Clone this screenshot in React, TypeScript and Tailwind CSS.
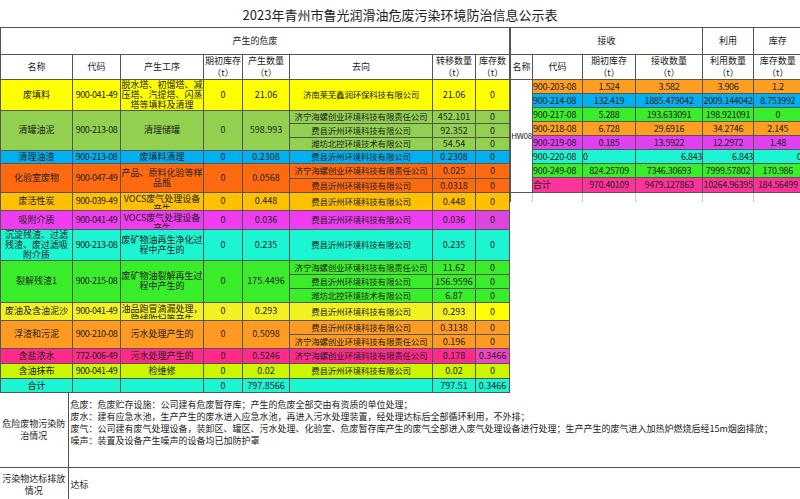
import React from "react";

const B = "border border-[#555]";

type Sub = { dest: string; qty: string; stock: string; stockBg?: string };
type Row = { name: string; code: string; proc: string; init: string; prod: string; bg: string; subs: Sub[]; hs: string[]; clip?: boolean };

const rows: Row[] = [
  { name: "废填料", code: "900-041-49", proc: "脱水塔、初馏塔、减压塔、汽提塔、闪蒸塔等填料及清理", init: "0", prod: "21.06", bg: "bg-[#ffff00]", subs: [{ dest: "济南莱芜鑫润环保科技有限公司", qty: "21.06", stock: "0" }], hs: ["h-[31px]"] },
  { name: "清罐油泥", code: "900-213-08", proc: "清理储罐", init: "0", prod: "598.993", bg: "bg-[#92d050]", subs: [{ dest: "济宁海螺创业环境科技有限责任公司", qty: "452.101", stock: "0" }, { dest: "费县沂州环境科技有限公司", qty: "92.352", stock: "0" }, { dest: "潍坊北控环境技术有限公司", qty: "54.54", stock: "0" }], hs: ["h-[13px]", "h-[14px]", "h-[13px]"] },
  { name: "清理油渣", code: "900-213-08", proc: "废填料清理", init: "0", prod: "0.2308", bg: "bg-[#00b0f0]", subs: [{ dest: "费县沂州环境科技有限公司", qty: "0.2308", stock: "0" }], hs: ["h-[13px]"] },
  { name: "化验室废物", code: "900-047-49", proc: "产品、原料化验等样品瓶", init: "0", prod: "0.0568", bg: "bg-[#ff6a10]", subs: [{ dest: "济宁海螺创业环境科技有限责任公司", qty: "0.025", stock: "0" }, { dest: "费县沂州环境科技有限公司", qty: "0.0318", stock: "0" }], hs: ["h-[15px]", "h-[14px]"] },
  { name: "废活性炭", code: "900-039-49", proc: "VOCS废气处理设备产生", init: "0", prod: "0.448", bg: "bg-[#ffc000]", subs: [{ dest: "费县沂州环境科技有限公司", qty: "0.448", stock: "0" }], hs: ["h-[18px]"], clip: true },
  { name: "吸附介质", code: "900-041-49", proc: "VOCS废气处理设备产生", init: "0", prod: "0.036", bg: "bg-[#f03cf0]", subs: [{ dest: "费县沂州环境科技有限公司", qty: "0.036", stock: "0", stockBg: "bg-[#dd44dd]" }], hs: ["h-[19px]"], clip: true },
  { name: "沉淀残渣、过滤残渣、废过滤吸附介质", code: "900-213-08", proc: "废矿物油再生净化过程中产生的", init: "0", prod: "0.235", bg: "bg-[#1cf5d2]", subs: [{ dest: "费县沂州环境科技有限公司", qty: "0.235", stock: "0" }], hs: ["h-[31px]"] },
  { name: "裂解残渣1", code: "900-215-08", proc: "废矿物油裂解再生过程中产生的", init: "0", prod: "175.4496", bg: "bg-[#3aed2a]", subs: [{ dest: "济宁海螺创业环境科技有限责任公司", qty: "11.62", stock: "0" }, { dest: "费县沂州环境科技有限公司", qty: "156.9596", stock: "0" }, { dest: "潍坊北控环境技术有限公司", qty: "6.87", stock: "0" }], hs: ["h-[14px]", "h-[14px]", "h-[14px]"] },
  { name: "废油及含油泥沙", code: "900-041-49", proc: "油品跑冒滴漏处理，管线吹扫等产生", init: "0", prod: "0.293", bg: "bg-[#f2f222]", subs: [{ dest: "费县沂州环境科技有限公司", qty: "0.293", stock: "0", stockBg: "bg-[#ffff00]" }], hs: ["h-[18px]"], clip: true },
  { name: "浮渣和污泥", code: "900-210-08", proc: "污水处理产生的", init: "0", prod: "0.5098", bg: "bg-[#ff9a22]", subs: [{ dest: "费县沂州环境科技有限公司", qty: "0.3138", stock: "0" }, { dest: "济宁海螺创业环境科技有限责任公司", qty: "0.196", stock: "0" }], hs: ["h-[14px]", "h-[14px]"] },
  { name: "含盐浓水", code: "772-006-49", proc: "污水处理产生的", init: "0", prod: "0.5246", bg: "bg-[#ff2a8a]", subs: [{ dest: "济宁海螺创业环境科技有限责任公司", qty: "0.178", stock: "0.3466", stockBg: "bg-[#f044c0]" }], hs: ["h-[15px]"] },
  { name: "含油抹布", code: "900-041-49", proc: "检维修", init: "0", prod: "0.02", bg: "bg-[#ccf500]", subs: [{ dest: "费县沂州环境科技有限公司", qty: "0.02", stock: "0" }], hs: ["h-[15px]"] },
];

const right = [
  { code: "900-203-08", a: "1.524", b: "3.582", c: "3.906", d: "1.2", bg: "bg-[#ff9f22]" },
  { code: "900-214-08", a: "132.419", b: "1885.479042", c: "2009.144042", d: "8.753992", bg: "bg-[#00b0f0]" },
  { code: "900-217-08", a: "5.288", b: "193.633091", c: "198.921091", d: "0", bg: "bg-[#3aed2a]" },
  { code: "900-218-08", a: "6.728", b: "29.6916", c: "34.2746", d: "2.145", bg: "bg-[#ff9f22]" },
  { code: "900-219-08", a: "0.185", b: "13.5922", c: "12.2972", d: "1.48", bg: "bg-[#e040f0]" },
  { code: "900-220-08", a: "0", b: "6.843", c: "6.843", d: "0", bg: "bg-[#1cf5d2]", r: true },
  { code: "900-249-08", a: "824.25709", b: "7346.30693", c: "7999.57802", d: "170.986", bg: "bg-[#3aed2a]" },
  { code: "合计", a: "970.40109", b: "9479.127863", c: "10264.96395", d: "184.56499", bg: "bg-[#ff3399]" },
];

export default function App() {
  return (
    <div className="w-[800px] h-[499px] bg-white overflow-hidden text-[9px] leading-[12px] text-[#222]" style={{ fontFamily: '"Noto Sans CJK SC", "Liberation Sans", sans-serif' }}>
      <div className="h-[28px] border-b border-[#555] flex items-center justify-center text-[13px] pt-[2px]">2023年青州市鲁光润滑油危废污染环境防治信息公示表</div>
      <div className="flex">
        <table className="table-fixed border-collapse w-[509px] text-center">
          <colgroup>
            <col className="w-[72px]" /><col className="w-[48px]" /><col className="w-[83px]" /><col className="w-[39px]" /><col className="w-[47px]" /><col className="w-[143px]" /><col className="w-[43px]" /><col className="w-[34px]" />
          </colgroup>
          <tbody>
            <tr className="h-[26px]"><td colSpan={8} className={B + " border-t-0"}>产生的危废</td></tr>
            <tr className="h-[21px]">
              <td className={B}>名称</td><td className={B}>代码</td><td className={B}>产生工序</td>
              <td className={B}>期初库存<br />（t）</td><td className={B}>产生数量<br />（t）</td><td className={B}>去向</td>
              <td className={B}>转移数量<br />（t）</td><td className={B + " whitespace-nowrap overflow-hidden"}>库存数<br />（t）</td>
            </tr>
            {rows.map((r) =>
              r.subs.map((s, i) => (
                <tr key={r.name + i} className={r.hs[i]}>
                  {i === 0 && (
                    <>
                      <td rowSpan={r.subs.length} className={B + " " + r.bg + " leading-[10px]"}>{r.name}</td>
                      <td rowSpan={r.subs.length} className={B + " " + r.bg + " tracking-tighter"}>{r.code}</td>
                      <td rowSpan={r.subs.length} className={B + " " + r.bg + " leading-[10px]"}>
                        {r.clip ? <div className="h-[16px] overflow-hidden pt-[1px]">{r.proc}</div> : r.proc}
                      </td>
                      <td rowSpan={r.subs.length} className={B + " " + r.bg}>{r.init}</td>
                      <td rowSpan={r.subs.length} className={B + " " + r.bg}>{r.prod}</td>
                    </>
                  )}
                  <td className={B + " " + r.bg + " whitespace-nowrap overflow-hidden leading-[11px] text-[8.5px] tracking-[-0.2px]"}>{s.dest}</td>
                  <td className={B + " " + r.bg + " leading-[11px]"}>{s.qty}</td>
                  <td className={B + " " + (s.stockBg ?? r.bg) + " leading-[11px]"}>{s.stock}</td>
                </tr>
              ))
            )}
            <tr className="h-[14px] bg-[#1cf5d2] leading-[11px]">
              <td className={B}>合计</td><td className={B}></td><td className={B}></td><td className={B}>0</td><td className={B}>797.8566</td><td className={B}></td><td className={B}>797.51</td><td className={B}>0.3466</td>
            </tr>
          </tbody>
        </table>
        <div className="w-[291px]">
          <table className="table-fixed border-collapse w-[291px] text-center">
            <colgroup>
              <col className="w-[22px]" /><col className="w-[50px]" /><col className="w-[53px]" /><col className="w-[67px]" /><col className="w-[51px]" /><col className="w-[48px]" />
            </colgroup>
            <tbody>
              <tr className="h-[26px]"><td colSpan={4} className={B + " border-t-0"}>接收</td><td className={B + " border-t-0"}>利用</td><td className={B + " border-t-0 border-r-0"}>库存</td></tr>
              <tr className="h-[21px]">
                <td className={B}>名称</td><td className={B}>代码</td><td className={B}>期初库存<br />（t）</td><td className={B}>接收数量<br />（t）</td><td className={B}>利用数量<br />（t）</td><td className={B + " border-r-0"}>库存数量<br />（t）</td>
              </tr>
              {right.map((r, i) => (
                <tr key={r.code} className={(i === 7 ? "h-[15px] " : "h-[14px] ") + r.bg + " leading-[11px] tracking-[-0.3px]"}>
                  {i === 0 && <td rowSpan={8} className={B + " bg-white text-[8px]"}>HW08</td>}
                  <td className={B + " text-left whitespace-nowrap overflow-hidden"}>{r.code}</td>
                  <td className={B + " whitespace-nowrap overflow-hidden" + (r.r ? " text-left" : "")}>{r.a}</td>
                  <td className={B + " whitespace-nowrap overflow-hidden" + (r.r ? " text-right" : "")}>{r.b}</td>
                  <td className={B + " whitespace-nowrap overflow-hidden" + (r.r ? " text-right" : "")}>{r.c}</td>
                  <td className={B + " whitespace-nowrap overflow-hidden border-r-0" + (r.r ? " text-right" : "")}>{r.d}</td>
                </tr>
              ))}
              <tr className="h-[10px]"><td className="border-l border-[#555]"></td><td className="border-x border-[#ccc]"></td><td className="border-r border-[#ccc]"></td><td className="border-r border-[#ccc]"></td><td className="border-r border-[#ccc]"></td><td></td></tr>
            </tbody>
          </table>
        </div>
      </div>
      <table className="table-fixed border-collapse w-[800px]">
        <colgroup><col className="w-[68px]" /><col /></colgroup>
        <tbody>
          <tr className="h-[75px]">
            <td className="border-r border-b border-[#555] text-center leading-[12px]">危险废物污染防治情况</td>
            <td className="border-b border-[#555] pl-[2px] pt-[6px] align-top leading-[12px] whitespace-nowrap">
              <div>危废：危废贮存设施：公司建有危废暂存库；产生的危废全部交由有资质的单位处理；</div>
              <div>废水：建有应急水池，生产产生的废水进入应急水池，再进入污水处理装置，经处理达标后全部循环利用，不外排；</div>
              <div>废气：公司建有废气处理设备，装卸区、罐区、污水处理、化验室、危废暂存库产生的废气全部进入废气处理设备进行处理；生产产生的废气进入加热炉燃烧后经15m烟囱排放；</div>
              <div>噪声：装置及设备产生噪声的设备均已加防护罩</div>
            </td>
          </tr>
          <tr className="h-[34px]">
            <td className="border-r border-b border-[#555] text-center leading-[12px]">污染物达标排放情况</td>
            <td className="border-b border-[#555] pl-[2px]">达标</td>
          </tr>
        </tbody>
      </table>
    </div>
  );
}
